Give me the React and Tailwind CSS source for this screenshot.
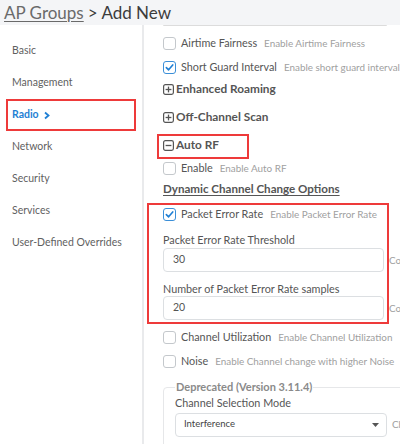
import React from "react";

const Check = ({ checked }) => (
  <span
    className={
      "flex h-[13px] w-[13px] shrink-0 items-center justify-center rounded-[3px] border bg-white " +
      (checked ? "border-[#3b8fd8]" : "border-[#c4c8cc]")
    }
  >
    {checked && (
      <svg width="9" height="9" viewBox="0 0 10 10">
        <path d="M1.5 5.2 L4 7.6 L8.6 2.2" fill="none" stroke="#1f7fd4" strokeWidth="1.8" strokeLinecap="round" strokeLinejoin="round" />
      </svg>
    )}
  </span>
);

const CheckRow = ({ checked, label, help, h = "h-[24px]" }) => (
  <div className={"flex items-center whitespace-nowrap " + h}>
    <Check checked={checked} />
    <span className="ml-[5px] text-[10.8px] text-[#555]">{label}</span>
    <span className="ml-[7px] text-[9.9px] text-[#a0a0a0]">{help}</span>
  </div>
);

const PlusBox = ({ minus }) => (
  <svg width="11" height="11" viewBox="0 0 11 11" className="shrink-0">
    <rect x="0.6" y="0.6" width="9.8" height="9.8" rx="1.8" fill="none" stroke="#555" strokeWidth="1.2" />
    <path d="M2.6 5.5 H8.4" stroke="#555" strokeWidth="1.3" />
    {!minus && <path d="M5.5 2.6 V8.4" stroke="#555" strokeWidth="1.3" />}
  </svg>
);

const Section = ({ minus, title, cls }) => (
  <div className={"flex items-center gap-[2px] whitespace-nowrap text-[11.8px] font-bold text-[#555] " + cls}>
    <PlusBox minus={minus} />
    <span>{title}</span>
  </div>
);

export default function App() {
  const nav = ["Basic", "Management", "Radio", "Network", "Security", "Services", "User-Defined Overrides"];
  return (
    <div
      className="relative h-[444px] w-[400px] overflow-hidden bg-white"
      style={{ fontFamily: "Lato, 'Noto Sans', sans-serif" }}
    >
      <div className="flex h-[25px] items-end whitespace-nowrap bg-[#f4f5f7] pb-[4px] pl-[4px] text-[17px] leading-none">
        <span className="text-[#6a6a6a] underline decoration-[1px] underline-offset-[2px]">AP Groups</span>
        <span className="ml-[4px] text-[#3c3c3c]">&gt; Add New</span>
      </div>
      <div className="flex h-[419px]">
        <div className="w-[142px] shrink-0 pt-[10px]">
          {nav.map((n) => (
            <div
              key={n}
              className={
                "mx-[6px] flex h-[32px] items-center border-2 px-[4px] text-[10.5px] whitespace-nowrap " +
                (n === "Radio" ? "border-[#ee3a3a] font-bold text-[#1f7fd4]" : "border-transparent text-[#5f5f5f]")
              }
            >
              {n}
              {n === "Radio" && (
                <svg width="8" height="9" viewBox="0 0 8 9" className="ml-[4px]">
                  <path d="M2 1.5 L5.5 4.5 L2 7.5" fill="none" stroke="#1f7fd4" strokeWidth="1.8" />
                </svg>
              )}
            </div>
          ))}
        </div>
        <div className="w-[2px] shrink-0 bg-[#e9eaec]" />
        <div className="relative min-w-0 flex-1 overflow-hidden pl-[19px]">
          <div className="h-[1px] rounded-b-[3px] border-b border-[#dcdcdc]" style={{ width: 224 }} />
          <div className="flex flex-col pt-[5px]">
            <CheckRow label="Airtime Fairness" help="Enable Airtime Fairness" />
            <CheckRow checked label="Short Guard Interval" help="Enable short guard interval" />
            <Section title="Enhanced Roaming" cls="h-[20px]" />
            <Section title="Off-Channel Scan" cls="mt-[8px] h-[20px]" />
            <Section minus title="Auto RF" cls="mt-[6px] h-[24px]" />
            <CheckRow label="Enable" help="Enable Auto RF" h="h-[22px]" />
            <div className="flex h-[20px] items-center whitespace-nowrap text-[11.6px] font-bold text-[#555] underline decoration-[1px] underline-offset-[2px]">
              Dynamic Channel Change Options
            </div>
            <div className="mt-[6px]">
              <CheckRow checked label="Packet Error Rate" help="Enable Packet Error Rate" h="h-[18px]" />
              <div className="mt-[10px] flex h-[14px] items-center text-[10.8px] whitespace-nowrap text-[#555]">
                Packet Error Rate Threshold
              </div>
              <div className="mt-[1px] flex items-center whitespace-nowrap">
                <div className="flex h-[24px] w-[221px] shrink-0 items-center rounded-[4px] border border-[#dcdfe2] pl-[9px] text-[10.5px] text-[#555]">
                  30
                </div>
                <span className="ml-[5px] text-[9.9px] text-[#a0a0a0]">Count threshold</span>
              </div>
              <div className="mt-[10px] flex h-[14px] items-center text-[10.8px] whitespace-nowrap text-[#555]">
                Number of Packet Error Rate samples
              </div>
              <div className="flex items-center whitespace-nowrap">
                <div className="flex h-[24px] w-[221px] shrink-0 items-center rounded-[4px] border border-[#dcdfe2] pl-[9px] text-[10.5px] text-[#555]">
                  20
                </div>
                <span className="ml-[5px] text-[9.9px] text-[#a0a0a0]">Count samples</span>
              </div>
            </div>
            <div className="mt-[5px]">
              <CheckRow label="Channel Utilization" help="Enable Channel Utilization" />
              <CheckRow label="Noise" help="Enable Channel change with higher Noise" />
            </div>
            <fieldset className="mt-[6px] w-[260px] shrink-0 rounded-[4px] border border-[#e6e7e9] pr-[8px] pb-[10px] pl-[11px]">
              <legend className="px-[1px] text-[11px] font-bold whitespace-nowrap text-[#8a8a8a]">
                Deprecated (Version 3.11.4)
              </legend>
              <div className="flex h-[16px] items-center text-[10.8px] whitespace-nowrap text-[#555]">Channel Selection Mode</div>
              <div className="mt-[1px] flex items-center whitespace-nowrap">
                <div className="flex h-[24px] w-[212px] shrink-0 items-center justify-between rounded-[4px] border border-[#dcdfe2] pr-[7px] pl-[8px] text-[9.5px] text-[#444]">
                  <span>Interference</span>
                  <svg width="7" height="4" viewBox="0 0 7 4">
                    <path d="M0 0 H7 L3.5 4 Z" fill="#555" />
                  </svg>
                </div>
                <span className="ml-[5px] text-[9.9px] text-[#a0a0a0]">Channel</span>
              </div>
            </fieldset>
          </div>
        </div>
      </div>
      <div className="pointer-events-none absolute top-[134px] left-[157px] h-[25px] w-[92px] border-2 border-[#ee3a3a]" />
      <div className="pointer-events-none absolute top-[203px] left-[147px] h-[121px] w-[242px] border-2 border-[#ee3a3a]" />
    </div>
  );
}
